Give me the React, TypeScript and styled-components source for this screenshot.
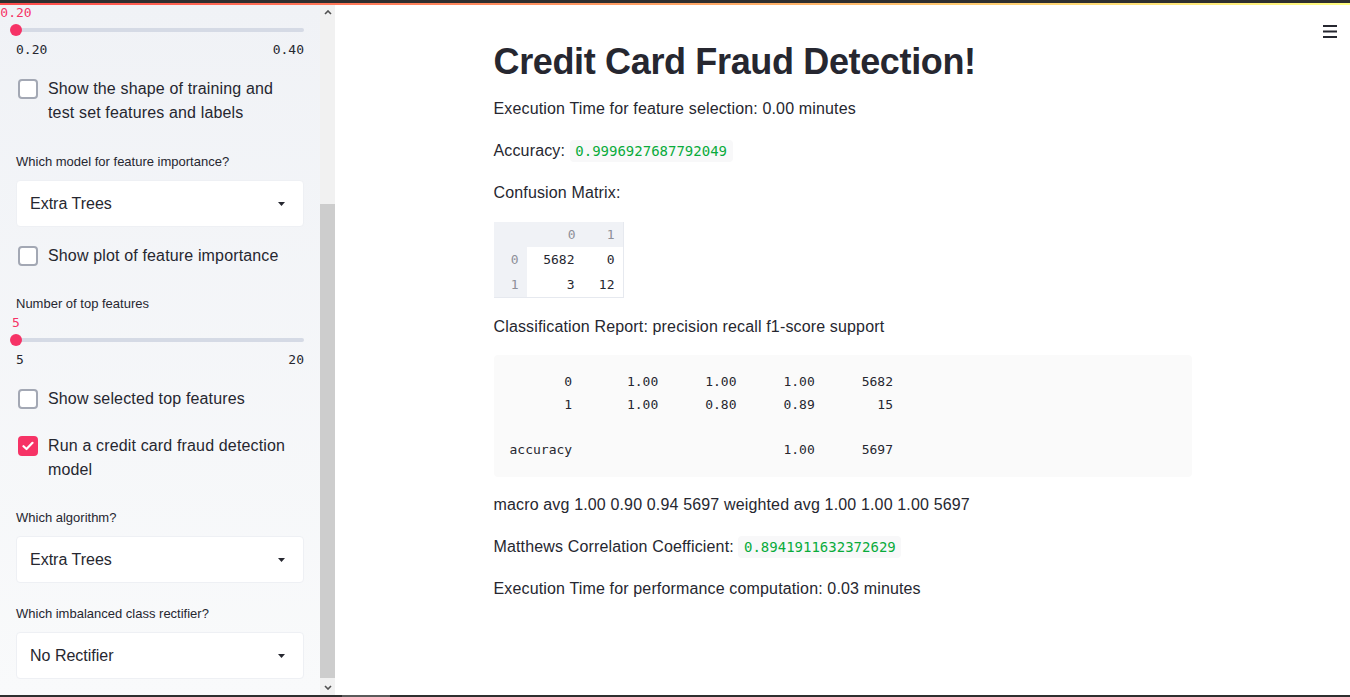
import React from "react";
import styled, { createGlobalStyle } from "styled-components";

const PINK = "#f63366";
const TEXT = "#262730";
const MONO = `"DejaVu Sans Mono", "Liberation Mono", monospace`;

const GlobalStyle = createGlobalStyle`
  html, body { margin: 0; padding: 0; height: 100%; overflow: hidden; background: #fff; }
  body { font-family: "Liberation Sans", Arial, sans-serif; color: ${TEXT}; }
  #root { height: 100%; }
  * { box-sizing: border-box; }
`;

const Frame = styled.div`
  display: flex;
  flex-direction: column;
  width: 1350px;
  height: 697px;
  overflow: hidden;
`;

const WindowEdge = styled.div<{ $h: number }>`
  height: ${(p) => p.$h}px;
  flex: none;
  background: linear-gradient(90deg, #2f2f2f 0, #2f2f2f 342px, #5a5a5a 342px, #5a5a5a 390px, #2f2f2f 390px);
`;

const TopEdge = styled.div`
  height: 3px;
  flex: none;
  background: #2f2f2f;
`;

const Decoration = styled.div`
  height: 2px;
  flex: none;
  background: linear-gradient(90deg, #ff4b4b, #fffd80);
`;

const Body = styled.div`
  flex: 1;
  display: flex;
  min-height: 0;
`;

const Sidebar = styled.aside`
  width: 320px;
  flex: none;
  overflow: hidden;
  background: linear-gradient(180deg, #f0f2f6 0%, #f9fafb 100%);
`;

const SidebarInner = styled.div`
  display: flex;
  flex-direction: column;
  padding: 0 16px;
  margin-top: -1px;
`;

const Widget = styled.div<{ $mt: number }>`
  margin-top: ${(p) => p.$mt}px;
`;

const WidgetLabel = styled.div<{ $mb?: number }>`
  font-size: 13px;
  line-height: 20px;
  color: ${TEXT};
  margin-bottom: ${(p) => p.$mb ?? 0}px;
`;

const ValueRow = styled.div`
  position: relative;
  height: 17px;
`;

const ThumbValue = styled.span`
  position: absolute;
  left: 0;
  top: 0;
  transform: translateX(-50%);
  font-family: ${MONO};
  font-size: 13px;
  line-height: 17px;
  color: ${PINK};
  white-space: nowrap;
`;

const TrackRow = styled.div`
  position: relative;
  height: 18px;
  display: flex;
  align-items: center;
`;

const Rail = styled.div`
  flex: 1;
  height: 4px;
  border-radius: 2px;
  background: #d5dae5;
`;

const Thumb = styled.div`
  position: absolute;
  left: -6px;
  top: 3px;
  width: 12px;
  height: 12px;
  border-radius: 50%;
  background: ${PINK};
`;

const Ticks = styled.div`
  display: flex;
  justify-content: space-between;
  font-family: ${MONO};
  font-size: 13px;
  line-height: 22px;
  color: ${TEXT};
`;

const CheckRow = styled.label`
  display: flex;
  align-items: flex-start;
  gap: 10px;
  padding-left: 2px;
  max-width: 272px;
  font-size: 16px;
  line-height: 24px;
  letter-spacing: 0.15px;
  color: ${TEXT};
`;

const Box = styled.span<{ $checked: boolean }>`
  flex: none;
  width: 20px;
  height: 20px;
  margin-top: 2px;
  border-radius: 4px;
  border: 2px solid ${(p) => (p.$checked ? PINK : "#a3a8b4")};
  background: ${(p) => (p.$checked ? PINK : "#fff")};
  display: flex;
  align-items: center;
  justify-content: center;
`;

const SelectBox = styled.div`
  height: 47px;
  display: flex;
  align-items: center;
  justify-content: space-between;
  padding: 0 18px 0 13px;
  background: #fff;
  border: 1px solid #eef0f4;
  border-radius: 4px;
  font-size: 16px;
  color: ${TEXT};
`;

const ScrollTrack = styled.div`
  width: 15px;
  flex: none;
  display: flex;
  flex-direction: column;
  background: #f1f1f1;
`;

const ScrollButton = styled.div`
  height: 15px;
  flex: none;
  display: flex;
  align-items: center;
  justify-content: center;
`;

const ScrollThumb = styled.div<{ $top: number; $h: number }>`
  margin-top: ${(p) => p.$top}px;
  height: ${(p) => p.$h}px;
  flex: none;
  background: #cdcdcd;
`;

const ScrollSpacer = styled.div`
  flex: 1;
`;

const Main = styled.main`
  flex: 1;
  position: relative;
  background: #fff;
  overflow: hidden;
`;

const MenuButton = styled.div`
  position: absolute;
  top: 20px;
  right: 13px;
  width: 14px;
  height: 13px;
  display: flex;
`;

const Content = styled.div`
  width: 698px;
  margin: 0 auto;
  padding-top: 35px;
`;

const Title = styled.h1`
  margin: 0 0 13px;
  font-size: 36px;
  line-height: 43px;
  font-weight: 700;
  letter-spacing: -0.35px;
  color: ${TEXT};
`;

const Para = styled.p`
  margin: 0 0 16px;
  font-size: 16px;
  line-height: 25.6px;
  letter-spacing: 0.15px;
  color: ${TEXT};
`;

const InlineCode = styled.code`
  font-family: ${MONO};
  font-size: 14px;
  letter-spacing: 0;
  color: #09ab3b;
  background: #f8f8f9;
  padding: 3px 5.6px;
  border-radius: 4px;
`;

const DataTable = styled.table`
  border-collapse: separate;
  border-spacing: 0;
  margin: 0 0 16px;
  font-family: ${MONO};
  font-size: 13px;
  border-right: 1px solid #e6e9ef;
  border-bottom: 1px solid #e6e9ef;
`;

const HeadCell = styled.th<{ $w: number }>`
  width: ${(p) => p.$w}px;
  min-width: ${(p) => p.$w}px;
  height: 25px;
  padding: 0 8px;
  text-align: right;
  font-weight: 400;
  color: #8e9099;
  background: #f0f2f6;
`;

const IndexCell = styled.th`
  height: 25px;
  padding: 0 8px;
  text-align: right;
  font-weight: 400;
  color: #8e9099;
  background: #f0f2f6;
`;

const Cell = styled.td<{ $pr?: number }>`
  height: 25px;
  padding: 0 ${(p) => p.$pr ?? 8}px 0 8px;
  text-align: right;
  color: ${TEXT};
  background: #fff;
`;

const CodeBlock = styled.pre`
  margin: 0 0 15px;
  padding: 16px;
  background: #fafafa;
  border-radius: 4px;
  font-family: ${MONO};
  font-size: 13px;
  line-height: 22.4px;
  color: ${TEXT};
  white-space: pre;
`;

const Caret = () => (
  <svg width="7" height="4" viewBox="0 0 7 4">
    <path d="M0 0h7L3.5 4z" fill={TEXT} />
  </svg>
);

const Chevron = ({ down }: { down?: boolean }) => (
  <svg width="8" height="5" viewBox="0 0 8 5">
    <path
      d={down ? "M1 1L4 4L7 1" : "M1 4L4 1L7 4"}
      fill="none"
      stroke="#505050"
      strokeWidth="1.6"
    />
  </svg>
);

const Slider = ({ label, value, min, max, mt }: { label?: string; value: string; min: string; max: string; mt: number }) => (
  <Widget $mt={mt}>
    {label && <WidgetLabel>{label}</WidgetLabel>}
    <ValueRow>
      <ThumbValue>{value}</ThumbValue>
    </ValueRow>
    <TrackRow>
      <Rail />
      <Thumb />
    </TrackRow>
    <Ticks>
      <span>{min}</span>
      <span>{max}</span>
    </Ticks>
  </Widget>
);

const Checkbox = ({ label, checked = false, mt }: { label: string; checked?: boolean; mt: number }) => (
  <Widget $mt={mt}>
    <CheckRow>
      <Box $checked={checked}>
        {checked && (
          <svg width="12" height="10" viewBox="0 0 12 10">
            <path d="M1.5 5.2L4.5 8L10.5 1.8" fill="none" stroke="#fff" strokeWidth="2.2" strokeLinecap="round" strokeLinejoin="round" />
          </svg>
        )}
      </Box>
      <span>{label}</span>
    </CheckRow>
  </Widget>
);

const Select = ({ label, value, mt }: { label: string; value: string; mt: number }) => (
  <Widget $mt={mt}>
    <WidgetLabel $mb={8}>{label}</WidgetLabel>
    <SelectBox>
      <span>{value}</span>
      <Caret />
    </SelectBox>
  </Widget>
);

const report = `       0       1.00      1.00      1.00      5682
       1       1.00      0.80      0.89        15

accuracy                           1.00      5697`;

export default function App() {
  return (
    <>
      <GlobalStyle />
      <Frame>
        <TopEdge />
        <Decoration />
        <Body>
          <Sidebar>
            <SidebarInner>
              <Slider value="0.20" min="0.20" max="0.40" mt={0} />
              <Checkbox label="Show the shape of training and test set features and labels" mt={16} />
              <Select label="Which model for feature importance?" value="Extra Trees" mt={27} />
              <Checkbox label="Show plot of feature importance" mt={17} />
              <Slider label="Number of top features" value="5" min="5" max="20" mt={26} />
              <Checkbox label="Show selected top features" mt={16} />
              <Checkbox label="Run a credit card fraud detection model" checked mt={23} />
              <Select label="Which algorithm?" value="Extra Trees" mt={26} />
              <Select label="Which imbalanced class rectifier?" value="No Rectifier" mt={21} />
            </SidebarInner>
          </Sidebar>
          <ScrollTrack>
            <ScrollButton>
              <Chevron />
            </ScrollButton>
            <ScrollThumb $top={184} $h={474} />
            <ScrollSpacer />
            <ScrollButton>
              <Chevron down />
            </ScrollButton>
          </ScrollTrack>
          <Main>
            <MenuButton>
              <svg width="14" height="13" viewBox="0 0 14 13">
                <rect x="0" y="0" width="14" height="2" fill={TEXT} />
                <rect x="0" y="5.5" width="14" height="2" fill={TEXT} />
                <rect x="0" y="11" width="14" height="2" fill={TEXT} />
              </svg>
            </MenuButton>
            <Content>
              <Title>Credit Card Fraud Detection!</Title>
              <Para>Execution Time for feature selection: 0.00 minutes</Para>
              <Para>
                Accuracy: <InlineCode>0.9996927687792049</InlineCode>
              </Para>
              <Para>Confusion Matrix:</Para>
              <DataTable>
                <thead>
                  <tr>
                    <HeadCell $w={33}></HeadCell>
                    <HeadCell $w={57}>0</HeadCell>
                    <HeadCell $w={39}>1</HeadCell>
                  </tr>
                </thead>
                <tbody>
                  <tr>
                    <IndexCell>0</IndexCell>
                    <Cell $pr={9}>5682</Cell>
                    <Cell>0</Cell>
                  </tr>
                  <tr>
                    <IndexCell>1</IndexCell>
                    <Cell $pr={9}>3</Cell>
                    <Cell>12</Cell>
                  </tr>
                </tbody>
              </DataTable>
              <Para>Classification Report: precision recall f1-score support</Para>
              <CodeBlock>{report}</CodeBlock>
              <Para>macro avg 1.00 0.90 0.94 5697 weighted avg 1.00 1.00 1.00 5697</Para>
              <Para>
                Matthews Correlation Coefficient: <InlineCode>0.8941911632372629</InlineCode>
              </Para>
              <Para>Execution Time for performance computation: 0.03 minutes</Para>
            </Content>
          </Main>
        </Body>
        <WindowEdge $h={2} />
      </Frame>
    </>
  );
}
